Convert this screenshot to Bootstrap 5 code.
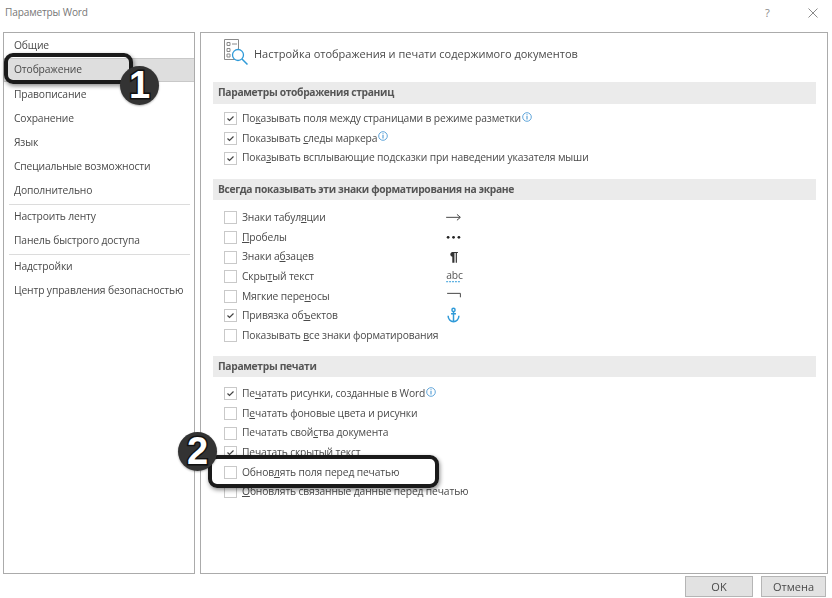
<!DOCTYPE html>
<html lang="ru"><head><meta charset="utf-8">
<link href="https://cdn.jsdelivr.net/npm/bootstrap@5.3.0/dist/css/bootstrap.min.css" rel="stylesheet">
<style>
html,body{height:598px;overflow:hidden}
body{width:832px;background:#fff;font-family:"Open Sans","Noto Sans",sans-serif;font-size:10.3px;letter-spacing:-.14px;color:#4a4a4a;position:relative}
.wintitle{height:32px;padding:0 14px 6px 5px;color:#777;font-size:10.1px}
.wintitle .tq{margin-right:33px;width:10px;font-size:11px;color:#888}
.panes{height:542px;padding:0 4px 0 3px;gap:5px;filter:blur(.3px)}
.sidepane{width:192px;border:1px solid #ababab;padding-top:1px;flex:none}
.sideitem{height:24.1px;padding-left:10px;display:flex;align-items:center}
.sideitem.sel{background:#dedede;border:1px solid #c8c8c8;border-width:1px 0}
.sidesep{border-top:1px solid #dcdcdc;margin:1px 4px 0 5px;height:1px}
.sideitem.tight{height:24px}
.mainpane{border:1px solid #ababab;padding:0 11px 0 12px;min-width:0}
.headline{height:49px;padding:6px 0 0 11px;gap:5px;font-size:11px;letter-spacing:0;color:#4a4a4a;align-items:flex-start}
.headline span{margin-top:7px}
.sect{height:22px;background:#ebebeb;padding-left:5px;font-weight:700;font-size:10.3px;letter-spacing:-.34px;color:#555}
.sect.s2{height:21px}
.optlist{padding:5px 0 0 11px}
.optlist.wide{padding-top:8px}
.optlist.mid{padding-top:7px}
.opt{height:19.65px;gap:5px;position:relative;white-space:nowrap}
.box{width:13px;height:13px;border:1px solid #c9c9c9;background:#fff;flex:none}
.box svg{display:block}
.glyph{position:absolute;left:221px;top:0;height:100%;width:18px}
.glyph.para{left:219px}
.sp1{height:11px}
.sp2{height:10.5px}
.info{margin-left:-4px;margin-top:-4px;flex:none}
.foot{height:24px;padding:2px 6px 0 0;gap:8px}
.wbtn{width:67px;height:21px;background:#e2e2e2;border:1px solid #b5b5b5;font-size:11px;color:#4a4a4a;line-height:1;padding:0;filter:blur(.3px)}
.wbtn.ok{width:68px}
.wbtn.no{width:65px}
.frame{position:absolute;border:4px solid #1a1a1a;border-radius:9px;box-shadow:1px 2px 4px rgba(0,0,0,.45)}
.frame1{left:4px;top:53px;width:129px;height:31px}
.frame2{left:208px;top:455px;width:231px;height:33px}
.bubble{position:absolute;width:39px;height:39px;border-radius:50%;background:#333;color:#fff;font-family:"Liberation Sans",sans-serif;font-weight:700;font-size:38px;letter-spacing:0;line-height:39px;text-align:center;-webkit-text-stroke:3px #111;paint-order:stroke fill;box-shadow:0 1px 2px rgba(0,0,0,.3)}
.bub1{left:120px;top:66px}
.bub2{left:178px;top:432px}
.dots{position:absolute;right:2px;bottom:2px;width:5px;height:5px;background:radial-gradient(#aaa 40%,transparent 45%) 0 0/2px 2px}
</style></head><body>
<div class="wintitle d-flex align-items-center justify-content-between">
  <span>Параметры Word</span>
  <span class="d-flex align-items-center"><span class="tq">?</span>
  <svg width="10" height="10" viewBox="0 0 10 10"><path d="M.5.5l9 9M9.500.5l-9 9" stroke="#8a8a8a" fill="none"/></svg></span>
</div>
<div class="panes d-flex">
  <div class="sidepane">
    <div class="sideitem">Общие</div>
    <div class="sideitem sel">Отображение</div>
    <div class="sideitem">Правописание</div>
    <div class="sideitem">Сохранение</div>
    <div class="sideitem">Язык</div>
    <div class="sideitem">Специальные возможности</div>
    <div class="sideitem">Дополнительно</div>
    <div class="sidesep"></div>
    <div class="sideitem tight">Настроить ленту</div>
    <div class="sideitem tight">Панель быстрого доступа</div>
    <div class="sidesep"></div>
    <div class="sideitem tight">Надстройки</div>
    <div class="sideitem tight">Центр управления безопасностью</div>
  </div>
  <div class="mainpane flex-grow-1">
    <div class="headline d-flex">
      <svg width="25" height="27" viewBox="0 0 25 27" fill="none"><path d="M.5.5h14v20H.5z" stroke="#8a8a8a" fill="#fff"/><path d="M3 3.500h3v3H3zM3 9.500h3v3H3zM3 15h3v3H3z" stroke="#8a8a8a"/><path d="M8 5h5" stroke="#8a8a8a"/><circle cx="14" cy="16" r="5.500" stroke="#2f9ad8" stroke-width="1.300" fill="#fff"/><path d="M18 20l5.500 5.500" stroke="#2f9ad8" stroke-width="1.500"/></svg>
      <span>Настройка отображения и печати содержимого документов</span>
    </div>
    <div class="sect d-flex align-items-center">Параметры отображения страниц</div>
    <div class="optlist">
      <div class="opt d-flex align-items-center"><span class="box"><svg width="11" height="11" viewBox="0 0 11 11"><path d="M2.500 5.500l2 2 4-4" stroke="#444" stroke-width="1.200" fill="none"/></svg></span><span>По<u>к</u>азывать поля между страницами в режиме разметки</span><svg class="info" width="10" height="10" viewBox="0 0 10 10"><circle cx="5" cy="5" r="4.300" stroke="#3a8fd0" fill="none" stroke-width=".8"/><path d="M5 4v3.500M5 2.300v1" stroke="#3a8fd0"/></svg></div>
      <div class="opt d-flex align-items-center"><span class="box"><svg width="11" height="11" viewBox="0 0 11 11"><path d="M2.500 5.500l2 2 4-4" stroke="#444" stroke-width="1.200" fill="none"/></svg></span><span>Показывать <u>с</u>леды маркера</span><svg class="info" width="10" height="10" viewBox="0 0 10 10"><circle cx="5" cy="5" r="4.300" stroke="#3a8fd0" fill="none" stroke-width=".8"/><path d="M5 4v3.500M5 2.300v1" stroke="#3a8fd0"/></svg></div>
      <div class="opt d-flex align-items-center"><span class="box"><svg width="11" height="11" viewBox="0 0 11 11"><path d="M2.500 5.500l2 2 4-4" stroke="#444" stroke-width="1.200" fill="none"/></svg></span><span>Пока<u>з</u>ывать всплывающие подсказки при наведении указателя мыши</span></div>
    </div>
    <div class="sp1"></div>
    <div class="sect s2 d-flex align-items-center">Всегда показывать эти знаки форматирования на экране</div>
    <div class="optlist wide">
      <div class="opt d-flex align-items-center"><span class="box"></span><span>Знаки табул<u>я</u>ции</span><svg class="glyph" viewBox="0 0 18 20" fill="none"><path d="M1 9.500h14M12 6.500l3.500 3-3.500 3" stroke="#444" stroke-width="1"/></svg></div>
      <div class="opt d-flex align-items-center"><span class="box"></span><span><u>П</u>робелы</span><svg class="glyph" viewBox="0 0 18 20"><circle cx="3" cy="9.500" r="1.400" fill="#222"/><circle cx="8.500" cy="9.500" r="1.400" fill="#222"/><circle cx="14" cy="9.500" r="1.400" fill="#222"/></svg></div>
      <div class="opt d-flex align-items-center"><span class="box"></span><span>Знаки а<u>б</u>зацев</span><svg class="glyph para" viewBox="0 0 18 20"><path d="M9 5h6v1h-1v10h-1.200V6h-1.300v10H9.300v-6A2.600 2.600 0 0 1 9 5z" fill="#333"/></svg></div>
      <div class="opt d-flex align-items-center"><span class="box"></span><span>Скры<u>т</u>ый текст</span><svg class="glyph" viewBox="0 0 18 20"><text x="1" y="12" font-size="10.500" font-family="Open Sans" fill="#555">abc</text><path d="M1 15h15" stroke="#2f9ad8" stroke-dasharray="2 1"/></svg></div>
      <div class="opt d-flex align-items-center"><span class="box"></span><span>Мягкие пере<u>н</u>осы</span><svg class="glyph" viewBox="0 0 18 20" fill="none"><path d="M2 7.500h13.500v4" stroke="#444"/></svg></div>
      <div class="opt d-flex align-items-center"><span class="box"><svg width="11" height="11" viewBox="0 0 11 11"><path d="M2.500 5.500l2 2 4-4" stroke="#444" stroke-width="1.200" fill="none"/></svg></span><span>Привязка об<u>ъ</u>ектов</span><svg class="glyph" viewBox="0 0 18 20" fill="none" stroke="#2f9ad8" stroke-width="1.500"><circle cx="8.500" cy="4" r="1.600"/><path d="M8.500 5.500V16M3 10c0 3.500 2.500 6 5.500 6s5.500-2.500 5.500-6M6 8h5"/></svg></div>
      <div class="opt d-flex align-items-center"><span class="box"></span><span>Показывать <u>в</u>се знаки форматирования</span></div>
    </div>
    <div class="sp2"></div>
    <div class="sect s2 d-flex align-items-center">Параметры печати</div>
    <div class="optlist mid">
      <div class="opt d-flex align-items-center"><span class="box"><svg width="11" height="11" viewBox="0 0 11 11"><path d="M2.500 5.500l2 2 4-4" stroke="#444" stroke-width="1.200" fill="none"/></svg></span><span>Пе<u>ч</u>атать рисунки, созданные в Word</span><svg class="info" width="10" height="10" viewBox="0 0 10 10"><circle cx="5" cy="5" r="4.300" stroke="#3a8fd0" fill="none" stroke-width=".8"/><path d="M5 4v3.500M5 2.300v1" stroke="#3a8fd0"/></svg></div>
      <div class="opt d-flex align-items-center"><span class="box"></span><span>П<u>е</u>чатать фоновые цвета и рисунки</span></div>
      <div class="opt d-flex align-items-center"><span class="box"></span><span>Печатать свой<u>с</u>тва документа</span></div>
      <div class="opt d-flex align-items-center"><span class="box"><svg width="11" height="11" viewBox="0 0 11 11"><path d="M2.500 5.500l2 2 4-4" stroke="#444" stroke-width="1.200" fill="none"/></svg></span><span>Печатать скрытый текст</span></div>
      <div class="opt d-flex align-items-center"><span class="box"></span><span>Обнов<u>л</u>ять поля перед печатью</span></div>
      <div class="opt d-flex align-items-center"><span class="box"></span><span><u>О</u>бновлять связанные данные перед печатью</span></div>
    </div>
  </div>
</div>
<div class="foot d-flex justify-content-end align-items-start">
  <button class="wbtn ok" type="button">OK</button>
  <button class="wbtn no" type="button">Отмена</button>
</div>
<span class="dots"></span>
<div class="frame frame1"></div>
<div class="frame frame2"></div>
<div class="bubble bub1">1</div>
<div class="bubble bub2">2</div>
</body></html>
